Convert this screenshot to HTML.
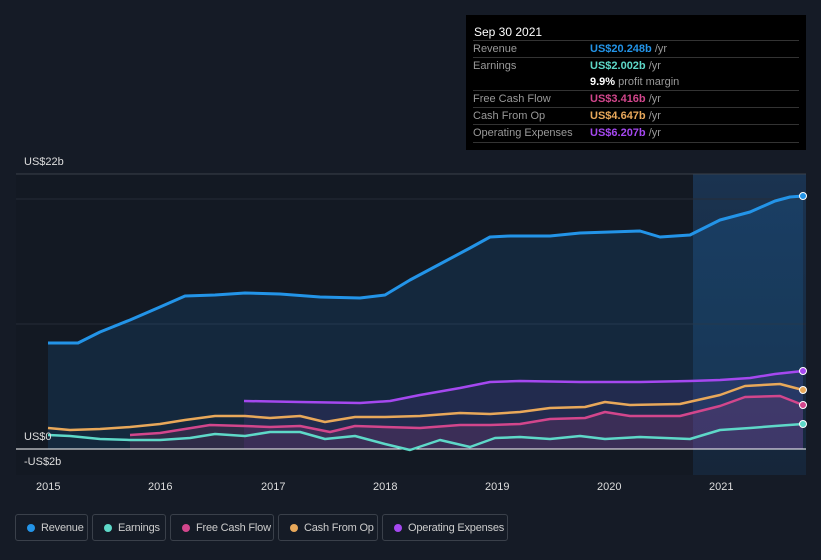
<!DOCTYPE html><html><head><style>
body{margin:0;width:821px;height:560px;background:#151b26;font-family:"Liberation Sans",sans-serif;overflow:hidden;position:relative}
.tt{position:absolute;left:466px;top:15px;width:340px;height:135px;background:#000;color:#999;font-size:11px}
.tt .h{color:#fff;font-size:12px;padding:10px 0 0 8px;height:17px}
.row{position:absolute;left:7px;width:326px;border-top:1px solid #333;height:16px;line-height:16px}
.row span{position:absolute;left:117px}
.ax{position:absolute;color:#ddd;font-size:11px}
.leg{position:absolute;top:514px;height:27px;border:1px solid #3a404a;border-radius:3px;color:#ccc;font-size:11px;letter-spacing:-0.2px;line-height:27px;box-sizing:border-box;white-space:nowrap}
.leg i{position:absolute;left:11px;top:9px;width:8px;height:8px;border-radius:50%}
.leg b{font-weight:normal;position:absolute;left:25px;top:0}
</style></head><body>
<svg width="821" height="560" style="position:absolute;left:0;top:0">
<defs><linearGradient id="g" x1="0" y1="0" x2="0" y2="1"><stop offset="0" stop-color="#1a3350"/><stop offset="1" stop-color="#16263a"/></linearGradient></defs>
<rect x="16" y="174" width="790" height="301" fill="#131923"/>
<rect x="693" y="174" width="113" height="301" fill="url(#g)"/>
<line x1="16" y1="174" x2="806" y2="174" stroke="#3a404a"/>
<line x1="16" y1="199" x2="806" y2="199" stroke="#262c37"/>
<line x1="16" y1="324" x2="806" y2="324" stroke="#262c37"/>
<polygon fill="rgba(33,150,243,0.13)" points="48,449 48,343 78,343 100,332 130,320 160,307 185,296 215,295 245,293 280,294 320,297 360,298 385,295 410,280 440,264 470,248 490,237 510,236 550,236 580,233 640,231 660,237 690,235 720,220 750,212 775,201 790,197 803,196 803,449"/>
<polygon fill="rgba(168,80,240,0.10)" points="244,449 244,401 300,402 360,403 390,401 420,395 460,388 490,382 520,381 580,382 640,382 690,381 720,380 750,378 775,374 803,371 803,449"/>
<polygon fill="rgba(210,70,140,0.15)" points="130,449 130,435 160,433 185,429 210,425 245,426 270,427 300,426 330,432 355,426 385,427 420,428 460,425 490,425 520,424 550,419 585,418 605,412 630,416 680,416 720,406 745,397 780,396 803,405 803,449"/>
<line x1="16" y1="449" x2="806" y2="449" stroke="#fff" stroke-width="1"/>
<g fill="none" stroke-width="2.5" stroke-linejoin="round">
<polyline stroke="#a548f0" points="244,401 300,402 360,403 390,401 420,395 460,388 490,382 520,381 580,382 640,382 690,381 720,380 750,378 775,374 803,371"/>
<polyline stroke="#e8a85a" points="48,428 70,430 100,429 130,427 160,424 185,420 215,416 245,416 270,418 300,416 325,422 355,417 385,417 420,416 460,413 490,414 520,412 550,408 585,407 605,402 630,405 680,404 720,395 745,386 780,384 803,390"/>
<polyline stroke="#d2468c" points="130,435 160,433 185,429 210,425 245,426 270,427 300,426 330,432 355,426 385,427 420,428 460,425 490,425 520,424 550,419 585,418 605,412 630,416 680,416 720,406 745,397 780,396 803,405"/>
<polyline stroke="#5ed8c8" points="48,435 70,436 100,439 130,440 160,440 190,438 215,434 245,436 270,432 300,432 325,439 355,436 385,444 410,450 440,440 470,447 495,438 520,437 550,439 580,436 605,439 640,437 690,439 720,430 750,428 775,426 803,424"/>
<polyline stroke="#2394e8" stroke-width="3" points="48,343 78,343 100,332 130,320 160,307 185,296 215,295 245,293 280,294 320,297 360,298 385,295 410,280 440,264 470,248 490,237 510,236 550,236 580,233 640,231 660,237 690,235 720,220 750,212 775,201 790,197 803,196"/>
</g>
<g stroke="#fff" stroke-width="1">
<circle cx="803" cy="196" r="3.5" fill="#2394e8"/><circle cx="803" cy="371" r="3.5" fill="#a548f0"/><circle cx="803" cy="390" r="3.5" fill="#e8a85a"/><circle cx="803" cy="405" r="3.5" fill="#d2468c"/><circle cx="803" cy="424" r="3.5" fill="#5ed8c8"/></g>
</svg>
<div class="ax" style="left:24px;top:156px">US$22b</div>
<div class="ax" style="left:24px;top:431px">US$0</div>
<div class="ax" style="left:24px;top:456px">-US$2b</div>
<div class="ax" style="left:36px;top:481px">2015</div><div class="ax" style="left:148px;top:481px">2016</div><div class="ax" style="left:261px;top:481px">2017</div><div class="ax" style="left:373px;top:481px">2018</div><div class="ax" style="left:485px;top:481px">2019</div><div class="ax" style="left:597px;top:481px">2020</div><div class="ax" style="left:709px;top:481px">2021</div>
<div class="tt"><div class="h">Sep 30 2021</div>
<div class="row" style="top:25px">Revenue<span><em style="font-style:normal;color:#2394e8;font-weight:bold">US$20.248b</em> /yr</span></div>
<div class="row" style="top:42px">Earnings<span><em style="font-style:normal;color:#5ed8c8;font-weight:bold">US$2.002b</em> /yr</span></div>
<div class="row" style="top:59px;border:0"><span><em style="font-style:normal;color:#fff;font-weight:bold">9.9%</em> profit margin</span></div>
<div class="row" style="top:75px">Free Cash Flow<span><em style="font-style:normal;color:#d2468c;font-weight:bold">US$3.416b</em> /yr</span></div>
<div class="row" style="top:92px">Cash From Op<span><em style="font-style:normal;color:#e8a85a;font-weight:bold">US$4.647b</em> /yr</span></div>
<div class="row" style="top:109px">Operating Expenses<span><em style="font-style:normal;color:#a548f0;font-weight:bold">US$6.207b</em> /yr</span></div>
<div class="row" style="top:127px;height:0"></div>
</div>
<div class="leg" style="left:15px;width:73px"><i style="background:#2394e8"></i><b>Revenue</b></div>
<div class="leg" style="left:92px;width:74px"><i style="background:#5ed8c8"></i><b>Earnings</b></div>
<div class="leg" style="left:170px;width:104px"><i style="background:#d2468c"></i><b>Free Cash Flow</b></div>
<div class="leg" style="left:278px;width:100px"><i style="background:#e8a85a"></i><b>Cash From Op</b></div>
<div class="leg" style="left:382px;width:126px"><i style="background:#a548f0"></i><b>Operating Expenses</b></div>
</body></html>
